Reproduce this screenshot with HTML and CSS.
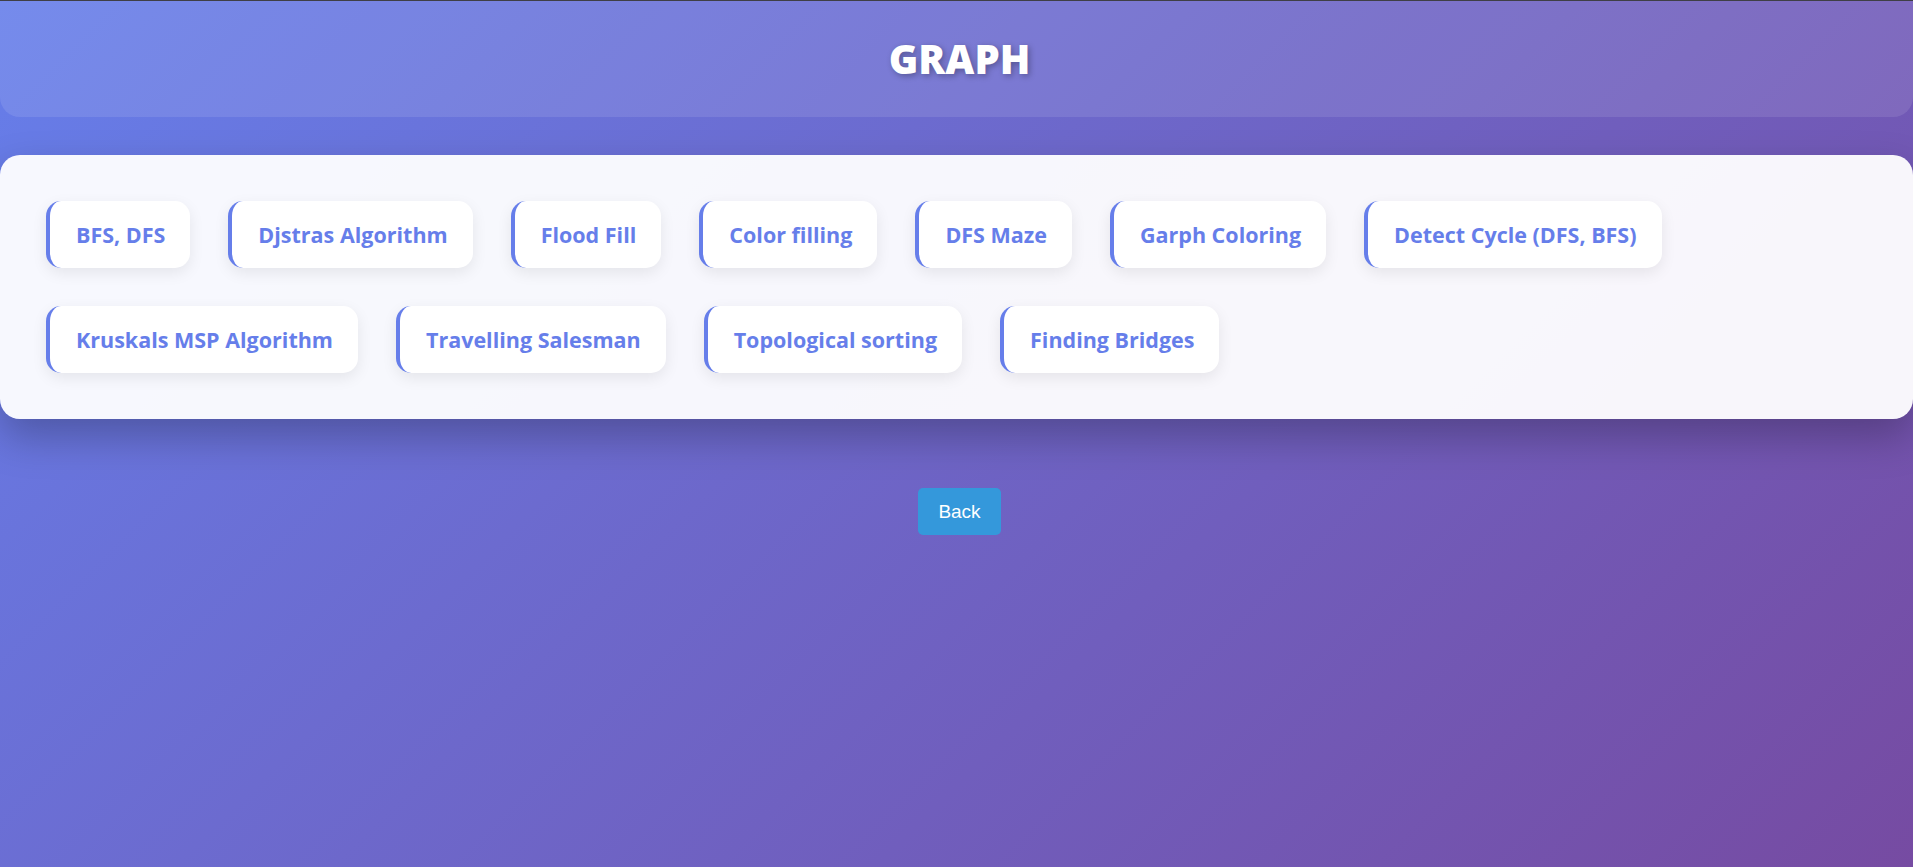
FILE: index.html
```html
<!DOCTYPE html>
<html lang="en">
<head>
<meta charset="utf-8">
<title>Graph</title>
<link rel="stylesheet" href="styles.css">
</head>
<body>
<header class="header">
  <h1 class="title">GRAPH</h1>
</header>
<main class="card">
  <a class="algo" href="#">BFS, DFS</a>
  <a class="algo" href="#">Djstras Algorithm</a>
  <a class="algo" href="#">Flood Fill</a>
  <a class="algo" href="#">Color filling</a>
  <a class="algo" href="#">DFS Maze</a>
  <a class="algo" href="#">Garph Coloring</a>
  <a class="algo" href="#">Detect Cycle (DFS, BFS)</a>
  <a class="algo" href="#">Kruskals MSP Algorithm</a>
  <a class="algo" href="#">Travelling Salesman</a>
  <a class="algo" href="#">Topological sorting</a>
  <a class="algo" href="#">Finding Bridges</a>
</main>
<div class="actions">
  <button class="back" type="button">Back</button>
</div>
</body>
</html>
```
FILE: styles.css
```css
html, body {
  margin: 0;
  padding: 0;
}
body {
  min-height: 100vh;
  box-sizing: border-box;
  border-top: 1px solid #3f3f46;
  background: linear-gradient(135deg, #667eea 0%, #764ba2 100%);
  font-family: "Open Sans", "Noto Sans", sans-serif;
  overflow: hidden;
}
.header {
  padding: 31px 20px 31px 26px;
  background: rgba(255, 255, 255, 0.1);
  border-radius: 0 0 20px 20px;
  text-align: center;
}
.title {
  margin: 0;
  font-size: 40px;
  line-height: 54px;
  font-weight: 800;
  color: #ffffff;
  text-shadow: 2px 2px 6px rgba(0, 0, 0, 0.3);
}
.card {
  margin-top: 38px;
  padding: 46px 46px 46px;
  background: rgba(255, 255, 255, 0.95);
  border-radius: 20px;
  box-shadow: 0 18px 40px rgba(0, 0, 0, 0.25);
  display: flex;
  flex-wrap: wrap;
  gap: 38px 38px;
}
.algo {
  display: block;
  padding: 20px 25px 20px 26px;
  background: #ffffff;
  border-left: 4px solid #667eea;
  border-radius: 15px;
  box-shadow: 0 5px 15px rgba(0, 0, 0, 0.08);
  color: #667eea;
  font-size: 21.5px;
  line-height: 27px;
  font-weight: 700;
  text-decoration: none;
}
.actions {
  display: flex;
  justify-content: center;
  padding-left: 6px;
  margin-top: 69px;
}
.back {
  padding: 12px 20px;
  border: none;
  border-radius: 5px;
  background: #3498db;
  color: #ffffff;
  font-family: "Liberation Sans", Arial, sans-serif;
  font-size: 19px;
  line-height: 23px;
  cursor: pointer;
}
```
